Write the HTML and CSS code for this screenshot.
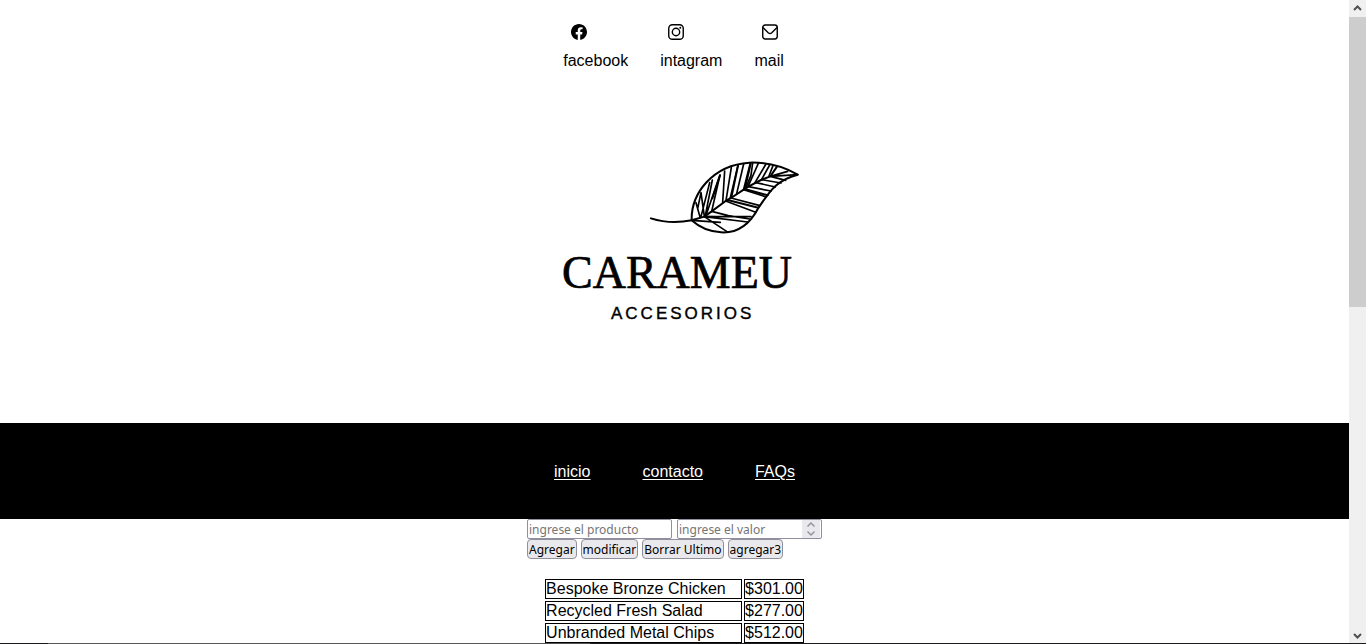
FILE: index.html
```html
<!DOCTYPE html>
<html lang="es">
<head>
<meta charset="utf-8">
<meta name="viewport" content="width=device-width, initial-scale=1">
<title>Carameu Accesorios</title>
<link rel="stylesheet" href="styles.css">
</head>
<body>
<div class="window">
  <div class="page">
    <header class="header">
      <ul class="social">
        <li class="social-item">
          <svg class="icon" viewBox="0 0 16 16" aria-hidden="true"><path d="M16 8.05C16 3.6 12.42 0 8 0S0 3.6 0 8.05C0 12.07 2.93 15.4 6.75 16v-5.62H4.72V8.05h2.03V6.28c0-2.02 1.2-3.13 3.02-3.13.88 0 1.8.16 1.8.16v1.98h-1.01c-1 0-1.31.62-1.31 1.26v1.5h2.22l-.35 2.33H9.25V16C13.07 15.4 16 12.07 16 8.05z"/></svg>
          <span>facebook</span>
        </li>
        <li class="social-item">
          <svg class="icon icon-line" viewBox="0 0 16 16" aria-hidden="true"><rect x=".75" y=".75" width="14.5" height="14.5" rx="3.6"/><circle cx="8" cy="8" r="3.7"/><circle class="dot" cx="12.3" cy="3.8" r="1"/></svg>
          <span>intagram</span>
        </li>
        <li class="social-item">
          <svg class="icon icon-line" viewBox="0 0 16 16" aria-hidden="true"><rect x=".75" y="1" width="14.5" height="14" rx="2.4"/><path d="M1 3.600l5.200 5.200q1.800 1.500 3.600 0L15 3.600"/></svg>
          <span>mail</span>
        </li>
      </ul>
      <svg class="logo" viewBox="550 150 260 180" role="img" aria-label="Carameu Accesorios">
        <g class="leaf" transform="translate(640 150) scale(.3333)">
          <path class="rim" d="M30 205C70 218 112 219 152 211M152 211C150 130 215 45 325 38C385 36 432 52 470 74C402 91 383 130 352 174C325 226 290 250 240 247C204 245 175 232 152 211L190 200L212 184L254 153L270 144L308 119L322 110L360 90L388 79L408 50"/>
          <path d="M165 158L177 201M180 128L170 176M180 128L190 199M206 98L180 200M214 90L193 197M237 75L195 196M237 75L212 184M251 63L245 157M271 53L255 152M291 46L268 143M308 42L287 131M328 39L308 118M335 39L330 76L314 114M352 40L322 108M375 42L342 98M386 45L362 88M396 47L384 78"/>
          <path d="M190 200L330 200M212 184L262 197L326 207M190 200L320 216M190 200L258 245M152 211L238 217M254 153L344 187M270 144L357 167M308 119L376 141M322 110L390 123M345 98L403 111M362 89L420 99M388 79L434 91M388 79L470 74M388 79L440 64"/>
          <path class="rim" d="M237 76L214 145M291 47L271 143M329 41L312 115M260 150L352 173M311 117L380 136M190 200L228 201"/>
        </g>
        <text class="brand" x="561" y="288">CARAMEU</text>
        <text class="tagline" x="610" y="319">ACCESORIOS</text>
      </svg>
    </header>
    <nav class="nav">
      <a href="#inicio">inicio</a>
      <a href="#contacto">contacto</a>
      <a href="#faqs">FAQs</a>
    </nav>
    <main class="main">
      <form class="form">
        <div class="fields">
          <input class="field" type="text" placeholder="ingrese el producto" aria-label="Producto">
          <div class="number">
            <input class="field" type="text" inputmode="numeric" placeholder="ingrese el valor" aria-label="Valor">
            <svg class="spinner" viewBox="0 0 18 18" aria-hidden="true"><path d="M5.5 6.5L9 3l3.500 3.500M5.500 11.500L9 15l3.500-3.500"/></svg>
          </div>
        </div>
        <div class="buttons">
          <button type="button">Agregar</button>
          <button type="button">modificar</button>
          <button type="button">Borrar Ultimo</button>
          <button type="button">agregar3</button>
        </div>
      </form>
      <table class="products">
        <tbody>
          <tr><td class="name">Bespoke Bronze Chicken</td><td>$301.00</td></tr>
          <tr><td class="name">Recycled Fresh Salad</td><td>$277.00</td></tr>
          <tr><td class="name">Unbranded Metal Chips</td><td>$512.00</td></tr>
        </tbody>
      </table>
    </main>
  </div>
  <div class="scrollbar" aria-hidden="true">
    <svg class="arrow" viewBox="0 0 17 17"><path d="M5 10l3.500-3.500L12 10"/></svg>
    <div class="track"><div class="thumb"></div></div>
    <svg class="arrow" viewBox="0 0 17 17"><path d="M5 7l3.500 3.500L12 7"/></svg>
  </div>
  <div class="edge"></div>
</div>
</body>
</html>
```
FILE: styles.css
```css
* {
  box-sizing: border-box;
}

body {
  margin: 0;
  background: #fff;
  color: #000;
  font: 16px/18px "Liberation Sans", Arial, sans-serif;
}

.window {
  position: relative;
  display: flex;
  height: 100vh;
  overflow: hidden;
}

.page {
  flex: 1;
  min-width: 0;
  overflow: hidden;
}

.header {
  display: flex;
  flex-direction: column;
  align-items: center;
  gap: 80px;
  padding: 24px 0 93px;
}

.social {
  display: flex;
  gap: 32px;
  margin: 0;
  padding: 0 2px 0 0;
  list-style: none;
}

.social-item {
  display: flex;
  flex-direction: column;
  gap: 12px;
}

.icon {
  width: 16px;
  height: 16px;
  margin-left: 8px;
}

.icon-line {
  fill: none;
  stroke: #000;
  stroke-width: 1.4;
}

.dot {
  fill: #000;
  stroke: none;
}

.logo {
  width: 260px;
  height: 180px;
  margin-left: 12px;
}

.leaf {
  fill: none;
  stroke: #000;
  stroke-width: 5;
  stroke-linejoin: round;
  stroke-linecap: round;
}

.rim {
  stroke-width: 6;
}

.brand {
  font: 46px "Liberation Serif", "Times New Roman", serif;
  stroke: #000;
  stroke-width: 0.7;
}

.tagline {
  font: 17px "Liberation Sans", Arial, sans-serif;
  letter-spacing: 3px;
  stroke: #000;
  stroke-width: 0.4;
}

.nav {
  display: flex;
  justify-content: center;
  gap: 52px;
  padding: 40px 0 38px;
  background: #000;
}

.nav a {
  color: #fff;
  text-underline-offset: 2px;
}

.main {
  display: flex;
  flex-direction: column;
  align-items: center;
  gap: 18px;
}

.form {
  font: 12px/16px "Noto Sans", sans-serif;
}

.fields {
  display: flex;
  gap: 5px;
}

.buttons {
  display: flex;
  gap: 4px;
}

.field {
  display: block;
  width: 145px;
  height: 20px;
  padding: 0 1px;
  border: 1px solid #8f8f9d;
  border-radius: 2px;
  background: #fff;
  font: inherit;
}

.field::placeholder {
  color: #757575;
  opacity: 1;
}

.number {
  position: relative;
}

.spinner {
  position: absolute;
  top: 1px;
  right: 2px;
  width: 18px;
  height: 18px;
  background: #e9e9ed;
  fill: none;
  stroke: #8f8f9d;
  stroke-width: 1.4;
}

.buttons button {
  height: 20px;
  padding: 1px 1px 0;
  border: 1px solid #8f8f9d;
  border-radius: 4px;
  background: #e9e9ed;
  color: #000;
  font: inherit;
}

.products {
  border-spacing: 2px;
}

.products td {
  padding: 0;
  border: 1px solid #000;
}

.products .name {
  width: 197px;
}

.scrollbar {
  display: flex;
  flex-direction: column;
  width: 17px;
  background: #f0f0f0;
}

.arrow {
  width: 17px;
  height: 17px;
  fill: none;
  stroke: #505050;
  stroke-width: 2;
}

.track {
  flex: 1;
}

.thumb {
  height: 47.5%;
  background: #cdcdcd;
}

.edge {
  position: absolute;
  inset: auto 0 0;
  height: 1px;
  background: linear-gradient(to right, #1a1a1c 48px, #555 48px, #555 590px, #1c1c1e 590px);
}
```
